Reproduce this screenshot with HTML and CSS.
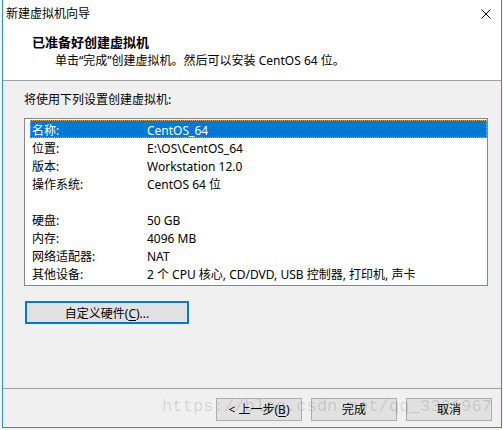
FILE: index.html
```html
<!DOCTYPE html>
<html lang="zh-CN">
<head>
<meta charset="utf-8">
<title>新建虚拟机向导</title>
<link rel="stylesheet" href="styles.css">
</head>
<body>
<div class="window">
  <div class="titlebar">
    <span class="title">新建虚拟机向导</span>
    <svg class="close" width="10" height="10" viewBox="0 0 10 10"><path d="M0.5 0.5 L9.5 9.5 M9.5 0.5 L0.5 9.5" stroke="#000" stroke-width="1" fill="none"/></svg>
  </div>
  <div class="header">
    <div class="heading">已准备好创建虚拟机</div>
    <div class="sub">单击“完成”创建虚拟机。然后可以安装 CentOS 64 位。</div>
  </div>
  <div class="body">
    <div class="intro">将使用下列设置创建虚拟机:</div>
    <div class="list">
      <div class="row selected"><span>名称:</span><span>CentOS_64</span></div>
      <div class="row"><span>位置:</span><span>E:\OS\CentOS_64</span></div>
      <div class="row"><span>版本:</span><span>Workstation 12.0</span></div>
      <div class="row"><span>操作系统:</span><span>CentOS 64 位</span></div>
      <div class="row"><span></span><span></span></div>
      <div class="row"><span>硬盘:</span><span>50 GB</span></div>
      <div class="row"><span>内存:</span><span>4096 MB</span></div>
      <div class="row"><span>网络适配器:</span><span>NAT</span></div>
      <div class="row"><span>其他设备:</span><span>2 个 CPU 核心, CD/DVD, USB 控制器, 打印机, 声卡</span></div>
    </div>
    <button class="btn custom">自定义硬件(<u>C</u>)...</button>
  </div>
  <div class="footer">
    <button class="btn">&lt; 上一步(<u>B</u>)</button>
    <button class="btn">完成</button>
    <button class="btn">取消</button>
    <div class="watermark">https://blog.csdn.net/qq_3321967</div>
  </div>
</div>
</body>
</html>
```
FILE: styles.css
```css
html, body {
  margin: 0;
  padding: 0;
  background: #f3f3f3;
}
body {
  width: 503px;
  height: 430px;
  overflow: hidden;
  font-family: "Noto Sans", "Noto Sans CJK SC", sans-serif;
  font-size: 12px;
  color: #000;
}
.window {
  margin-left: 2px;
  width: 500px;
  height: 428px;
  box-sizing: border-box;
  border-left: 1px solid #2a8be0;
  border-right: 1px solid #2a8be0;
  border-bottom: 1px solid #2a8be0;
  background: #f0f0f0;
  display: flex;
  flex-direction: column;
}
.titlebar {
  height: 27px;
  background: #fff;
  display: flex;
  align-items: center;
  justify-content: space-between;
  padding: 0 10px 0 3px;
  flex: none;
}
.title {
  font-family: "Noto Sans CJK SC", sans-serif;
  font-size: 12px;
  line-height: 18px;
  margin-top: -1px;
}
.close {
  display: block;
}
.header {
  height: 54px;
  box-sizing: border-box;
  background: #fff;
  border-bottom: 1px solid #a0a0a0;
  padding: 6px 0 0 29px;
  flex: none;
}
.heading {
  font-family: "Noto Sans CJK SC", sans-serif;
  font-weight: bold;
  font-size: 13px;
  line-height: 17px;
}
.sub {
  padding-left: 23px;
  margin-top: 2px;
  line-height: 18px;
}
.body {
  flex: 1;
  padding: 9px 0 0 21px;
  display: flex;
  flex-direction: column;
  align-items: flex-start;
}
.intro {
  line-height: 18px;
  font-family: "Noto Sans CJK SC", sans-serif;
}
.list {
  margin-top: 10px;
  width: 464px;
  height: 168px;
  box-sizing: border-box;
  border: 1px solid #828790;
  background: #fff;
  padding: 1px 0 3px 5px;
}
.row {
  display: grid;
  grid-template-columns: 115px 1fr;
  height: 18px;
  box-sizing: border-box;
  line-height: 18px;
  padding: 2px 0 0 2px;
  white-space: nowrap;
}
.row.selected {
  background: #0078d7;
  color: #fff;
  outline: 1px dotted #f5a23a;
  outline-offset: -1px;
}
.btn {
  font-family: "Noto Sans", "Noto Sans CJK SC", sans-serif;
  font-size: 12px;
  color: #000;
  background: #e1e1e1;
  border: 1px solid #adadad;
  width: 86px;
  height: 23px;
  padding: 0;
  margin: 0;
  line-height: 19px;
}
.btn u {
  text-decoration: underline;
  text-underline-offset: 2px;
}
.custom {
  margin: 15px 0 0 1px;
  width: 164px;
  border: 2px solid #0078d7;
  padding-top: 1px;
}
.footer {
  position: relative;
  height: 39px;
  box-sizing: border-box;
  border-top: 1px solid #a0a0a0;
  padding: 9px 9px 0 0;
  display: flex;
  justify-content: flex-end;
  align-items: flex-start;
  gap: 9px;
  flex: none;
}
.watermark {
  position: absolute;
  left: 159px;
  top: 7px;
  font-family: "Liberation Mono", monospace;
  font-size: 17.2px;
  line-height: 22px;
  color: rgba(0, 0, 0, 0.13);
  white-space: nowrap;
  pointer-events: none;
}
```
